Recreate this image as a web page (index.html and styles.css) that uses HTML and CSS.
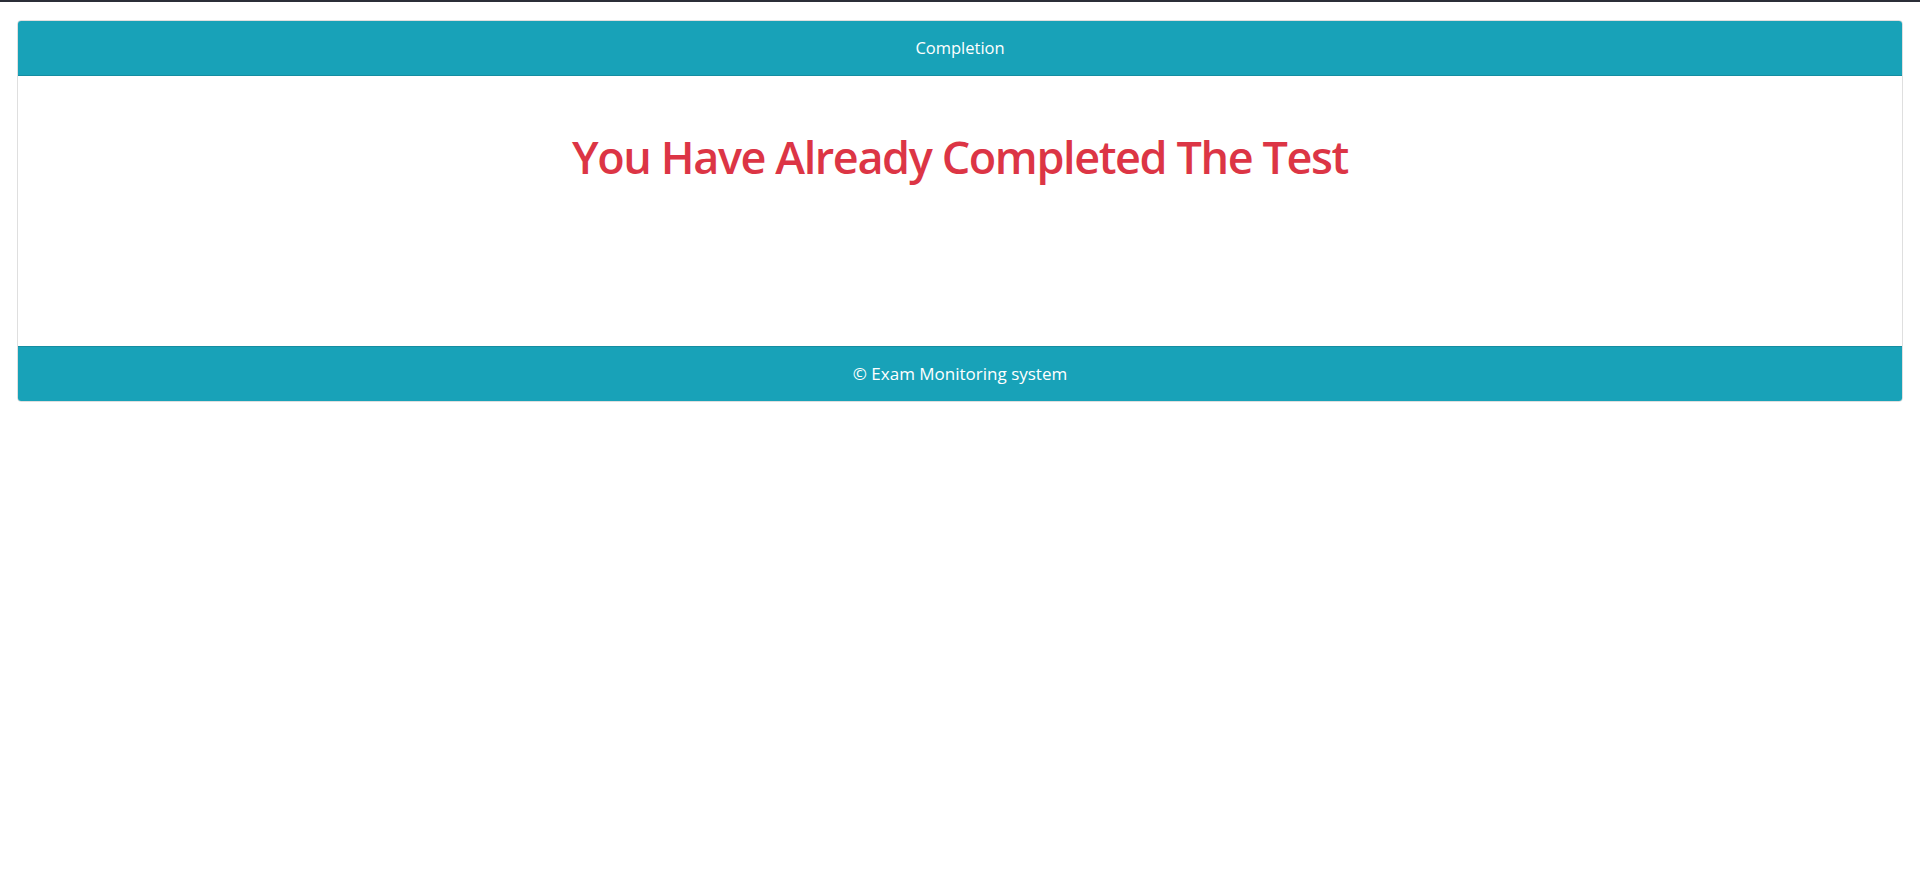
FILE: index.html
```html
<!DOCTYPE html>
<html>
<head>
<meta charset="utf-8">
<link rel="stylesheet" href="styles.css">
</head>
<body>
<div class="topbar"></div>
<div class="container">
  <div class="card">
    <div class="card-header">Completion</div>
    <div class="card-body">
      <h1 class="title">You Have Already Completed The Test</h1>
    </div>
    <div class="card-footer">© Exam Monitoring system</div>
  </div>
</div>
</body>
</html>
```
FILE: styles.css
```css
html, body {
  margin: 0;
  padding: 0;
  background: #fff;
  font-family: "Open Sans", "Noto Sans", sans-serif;
}
.topbar {
  height: 2px;
  background: #2b2e38;
}
.container {
  padding: 18px 17px 0 17px;
}
.card {
  border: 1px solid rgba(0,0,0,0.125);
  border-radius: 4px;
  overflow: hidden;
}
.card-header {
  background: #18a2b8;
  color: #fff;
  text-align: center;
  font-size: 16.5px;
  height: 54px;
  line-height: 54px;
  border-bottom: 1px solid rgba(0,0,0,0.125);
}
.card-body {
  height: 270px;
  box-sizing: border-box;
  padding: 53px 20px 0;
}
.title {
  margin: 0;
  text-align: center;
  color: #dc3545;
  font-family: "Open Sans", sans-serif;
  font-size: 45px;
  font-weight: 550;
  letter-spacing: -1.4px;
  line-height: 56px;
}
.card-footer {
  background: #18a2b8;
  color: #fff;
  text-align: center;
  font-size: 17px;
  height: 54px;
  line-height: 54px;
  border-top: 1px solid rgba(0,0,0,0.125);
}
```
